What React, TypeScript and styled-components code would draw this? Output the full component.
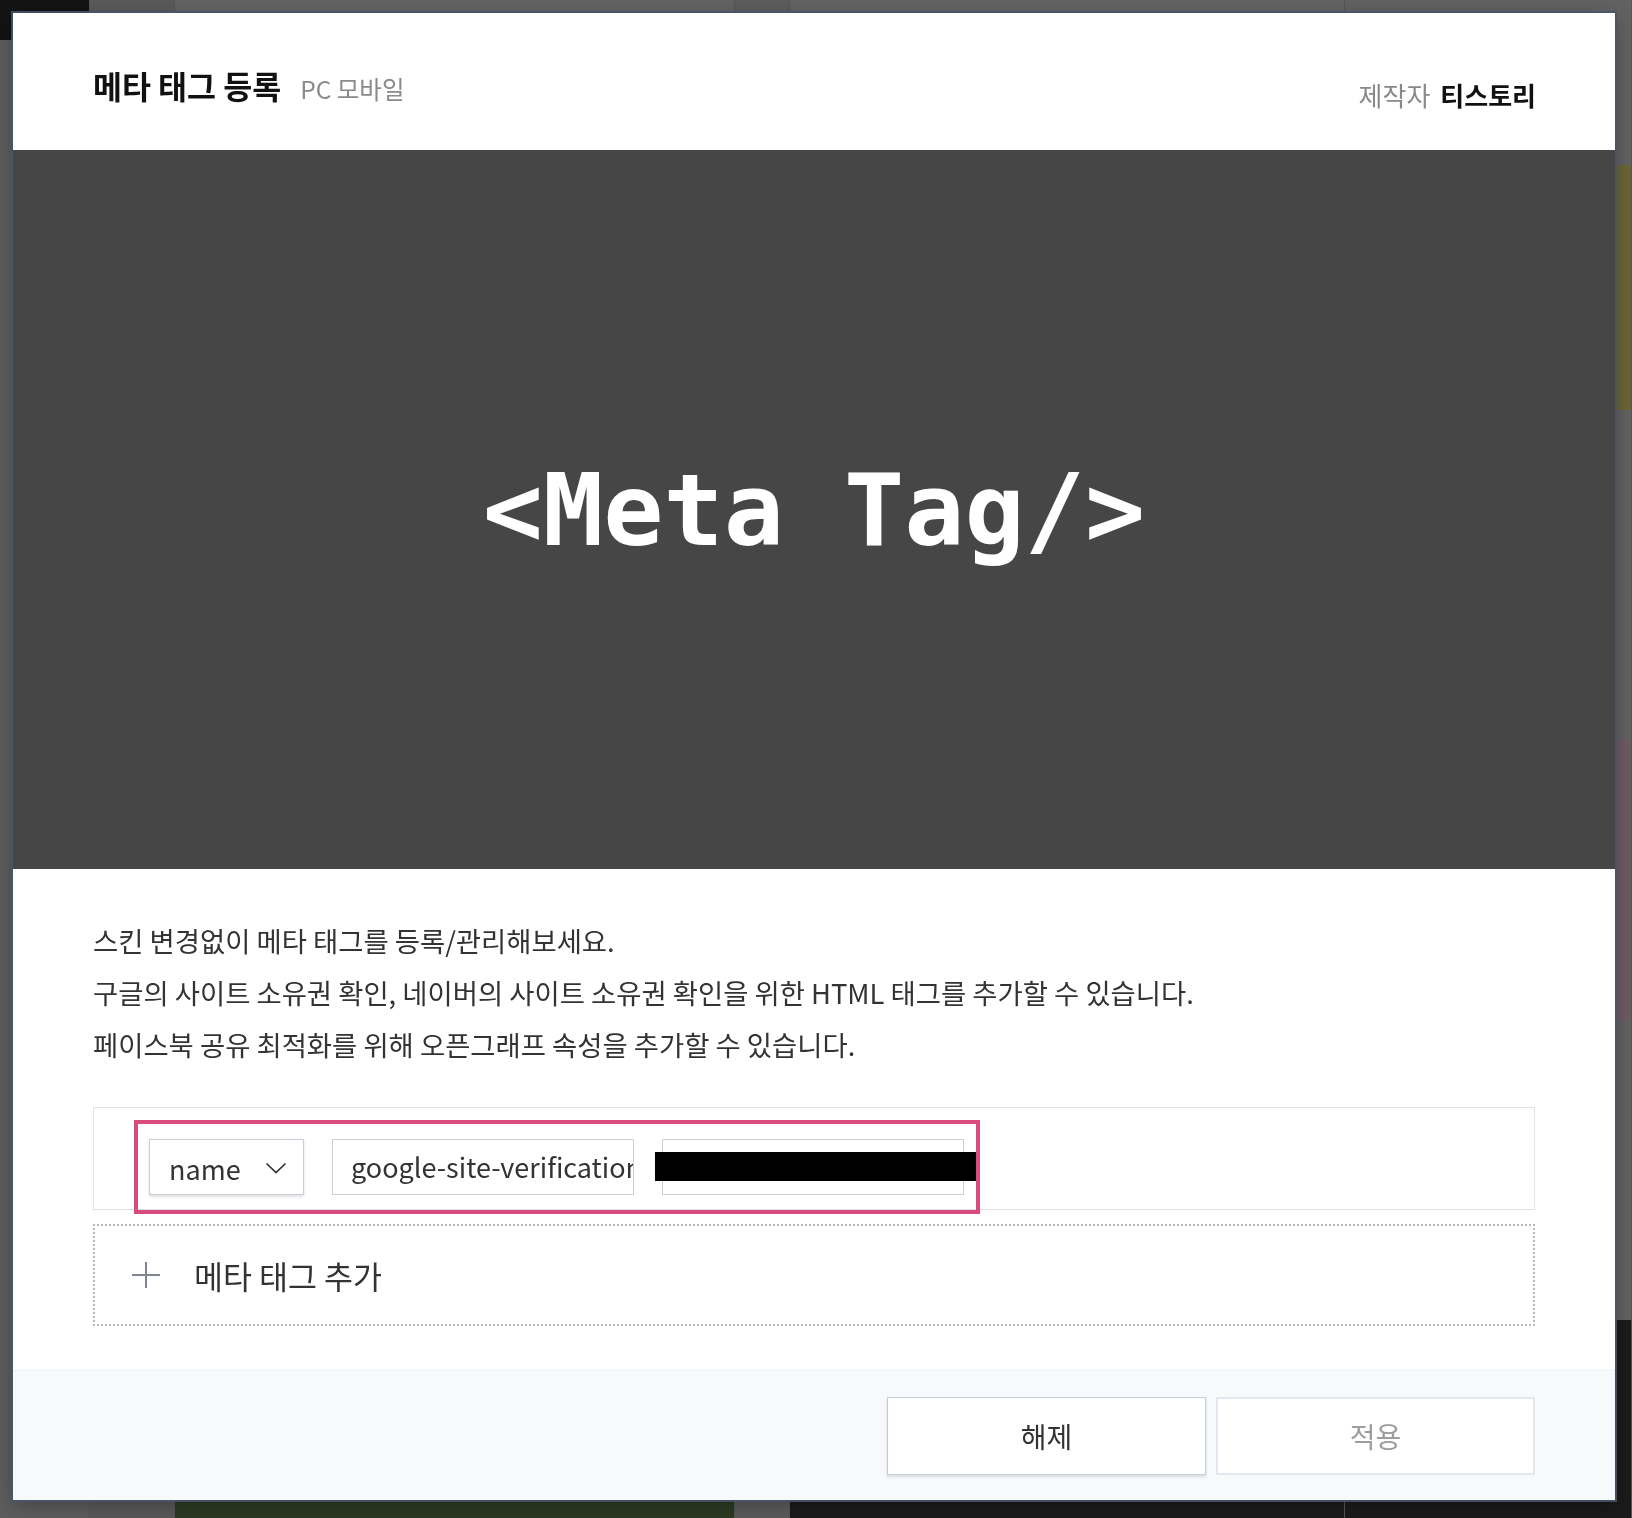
import React from 'react';
import styled, { createGlobalStyle } from 'styled-components';

const GlobalStyle = createGlobalStyle`
  html, body {
    margin: 0;
    padding: 0;
    width: 1632px;
    height: 1518px;
    overflow: hidden;
    background: #5c5c5c;
    font-family: "Noto Sans CJK KR", "Noto Sans", sans-serif;
  }
  * { box-sizing: border-box; }
`;

const Page = styled.div`
  display: grid;
  grid-template-columns: 90px 85px 560px 55px 555px 1fr;
  height: 1518px;
  background: #5e5e5e;
`;

const PageColumn = styled.div<{ $bg?: string }>`
  display: flex;
  flex-direction: column;
  background: ${(p) => p.$bg || '#5e5e5e'};
  border-right: 1px solid #575757;
`;

const Block = styled.div<{ $h: number; $bg: string; $grow?: boolean }>`
  height: ${(p) => p.$h}px;
  flex: ${(p) => (p.$grow ? '1' : 'none')};
  background: ${(p) => p.$bg};
`;

const Overlay = styled.div`
  position: fixed;
  inset: 0;
  display: flex;
  align-items: flex-start;
  justify-content: flex-start;
  padding: 13px 0 0 13px;
`;

const Modal = styled.div`
  width: 1602px;
  height: 1487px;
  background: #fff;
  display: flex;
  flex-direction: column;
  box-shadow: 0 0 0 2px rgba(72, 84, 104, 0.9), 0 6px 20px rgba(0, 0, 0, 0.3);
`;

const Header = styled.header`
  height: 137px;
  flex: none;
  display: flex;
  justify-content: space-between;
  align-items: flex-start;
  padding: 50px 79px 0 80px;
`;

const TitleGroup = styled.div`
  display: flex;
  align-items: baseline;
`;

const Title = styled.h1`
  margin: 0;
  font-size: 31.5px;
  line-height: 44px;
  font-weight: 700;
  color: #111;
`;

const Platforms = styled.span`
  margin-left: 19px;
  font-size: 24.5px;
  color: #8a8a8a;
`;

const Maker = styled.div`
  margin-top: 13px;
  font-size: 26px;
  line-height: 38px;
  color: #888;

  strong {
    margin-left: 10px;
    color: #111;
    font-weight: 700;
  }
`;

const Banner = styled.div`
  height: 719px;
  flex: none;
  background: #464646;
  display: flex;
  align-items: center;
  justify-content: center;
`;

const BannerText = styled.span`
  font-family: "DejaVu Sans Mono", "Liberation Mono", monospace;
  font-weight: 700;
  font-size: 100px;
  color: #fff;
  white-space: pre;
  margin-top: 2px;
`;

const Body = styled.div`
  flex: 1;
  padding: 45px 80px 0 80px;
`;

const Intro = styled.p`
  margin: 0;
  font-size: 27.4px;
  line-height: 52px;
  color: #333;
`;

const TagRow = styled.div`
  position: relative;
  margin-top: 37px;
  height: 103px;
  border: 1px solid #e0e4ea;
  display: flex;
  align-items: flex-start;
  gap: 28px;
  padding: 31px 0 0 55px;
`;

const Select = styled.div`
  width: 155px;
  height: 56px;
  flex: none;
  display: flex;
  align-items: center;
  justify-content: space-between;
  padding: 2px 16px 0 19px;
  border: 1px solid #c9cfd8;
  box-shadow: 0 2px 3px rgba(0, 0, 0, 0.12);
  font-size: 27px;
  color: #333;
  background: #fff;
`;

const FieldWrap = styled.div`
  position: relative;
  flex: none;
`;

const Field = styled.input`
  width: 302px;
  height: 56px;
  border: 1px solid #c9cfd8;
  padding: 0 0 2px 18px;
  font-family: "Noto Sans CJK KR", "Noto Sans", sans-serif;
  font-size: 27px;
  color: #333;
  background: #fff;
  outline: none;
`;

const Redaction = styled.div`
  position: absolute;
  left: -7px;
  top: 13px;
  width: 321px;
  height: 29px;
  background: #000;
`;

const Highlight = styled.div`
  position: absolute;
  left: 40px;
  top: 12px;
  width: 846px;
  height: 94px;
  border: 4px solid #d94b7c;
  pointer-events: none;
`;

const AddButton = styled.div`
  margin-top: 14px;
  height: 102px;
  border: 2px dotted #b5b9bf;
  display: flex;
  align-items: center;
  gap: 33px;
  padding-left: 36px;
  font-size: 31.5px;
  color: #333;
`;

const Footer = styled.footer`
  height: 130px;
  flex: none;
  border-top: 1px solid #edf0f4;
  background: #f8f9fb;
  display: flex;
  justify-content: flex-end;
  gap: 10px;
  padding: 26px 80px 0 0;
`;

const ActionButton = styled.button<{ $muted?: boolean }>`
  width: 319px;
  height: 78px;
  background: #fff;
  border: ${(p) => (p.$muted ? '2px solid #e3e7ef' : '1px solid #c6cdd7')};
  box-shadow: ${(p) => (p.$muted ? 'none' : '0 2px 3px rgba(0, 0, 0, 0.12)')};
  font-family: "Noto Sans CJK KR", "Noto Sans", sans-serif;
  font-size: 28px;
  color: ${(p) => (p.$muted ? '#9d9d9d' : '#333')};
  cursor: pointer;
`;

const Chevron = () => (
  <svg width="22" height="12" viewBox="0 0 22 12" fill="none">
    <path d="M1.5 1.5 L11 10.5 L20.5 1.5" stroke="#333" strokeWidth="1.7" />
  </svg>
);

const Plus = () => (
  <svg width="30" height="30" viewBox="0 0 30 30" fill="none">
    <path d="M15 2 V28 M1 15 H29" stroke="#7d8590" strokeWidth="2" />
  </svg>
);

export default function App() {
  return (
    <>
      <GlobalStyle />
      <Page>
        <PageColumn>
          <Block $h={40} $bg="#131313" />
        </PageColumn>
        <PageColumn $bg="#5a5a5a" />
        <PageColumn $bg="#626262">
          <Block $h={1490} $bg="#636363" />
          <Block $h={28} $bg="#2c3b24" $grow />
        </PageColumn>
        <PageColumn $bg="#5d5d5d" />
        <PageColumn $bg="#626262">
          <Block $h={1495} $bg="#636363" />
          <Block $h={23} $bg="#1c1c1c" $grow />
        </PageColumn>
        <PageColumn $bg="#606060">
          <Block $h={165} $bg="#626262" />
          <Block $h={245} $bg="#6b6535" />
          <Block $h={330} $bg="#626262" />
          <Block $h={280} $bg="#6e5b63" />
          <Block $h={300} $bg="#626262" />
          <Block $h={198} $bg="#1b1b1b" $grow />
        </PageColumn>
      </Page>

      <Overlay>
        <Modal>
          <Header>
            <TitleGroup>
              <Title>메타 태그 등록</Title>
              <Platforms>PC 모바일</Platforms>
            </TitleGroup>
            <Maker>
              제작자<strong>티스토리</strong>
            </Maker>
          </Header>

          <Banner>
            <BannerText>{'<Meta Tag/>'}</BannerText>
          </Banner>

          <Body>
            <Intro>스킨 변경없이 메타 태그를 등록/관리해보세요.</Intro>
            <Intro>구글의 사이트 소유권 확인, 네이버의 사이트 소유권 확인을 위한 HTML 태그를 추가할 수 있습니다.</Intro>
            <Intro>페이스북 공유 최적화를 위해 오픈그래프 속성을 추가할 수 있습니다.</Intro>

            <TagRow>
              <Select>
                <span>name</span>
                <Chevron />
              </Select>
              <FieldWrap>
                <Field readOnly value="google-site-verification" />
              </FieldWrap>
              <FieldWrap>
                <Field readOnly value="" />
                <Redaction />
              </FieldWrap>
              <Highlight />
            </TagRow>

            <AddButton>
              <Plus />
              <span>메타 태그 추가</span>
            </AddButton>
          </Body>

          <Footer>
            <ActionButton>해제</ActionButton>
            <ActionButton $muted>적용</ActionButton>
          </Footer>
        </Modal>
      </Overlay>
    </>
  );
}
